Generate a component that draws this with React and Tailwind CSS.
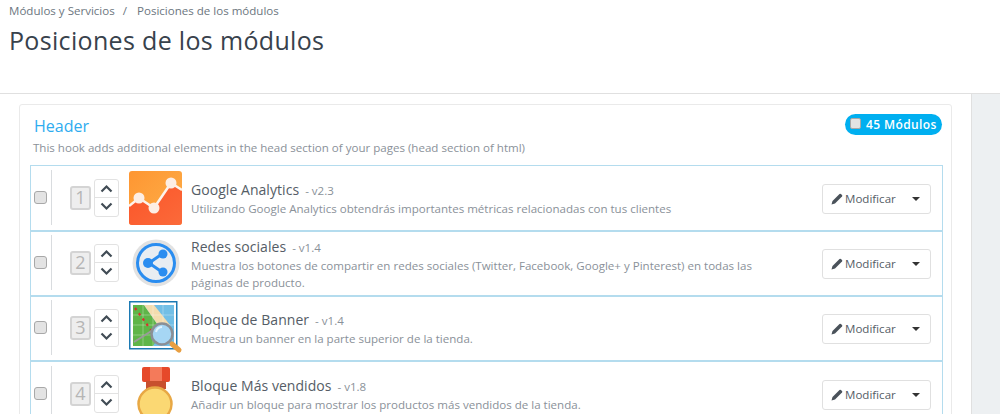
function Analytics() {
  return (
    <svg width="54" height="54" viewBox="0 0 54 54">
      <defs>
        <linearGradient id="ga1" x1="0" y1="0" x2="1" y2="1"><stop offset="0" stopColor="#fe9632" /><stop offset="1" stopColor="#fdb04a" /></linearGradient>
        <linearGradient id="ga2" x1="0" y1="0" x2="1" y2="1"><stop offset="0" stopColor="#fb5428" /><stop offset="1" stopColor="#fb6a3a" /></linearGradient>
      </defs>
      <rect width="53" height="54" rx="3" fill="url(#ga1)" />
      <path d="M0 34 L10 27 L25 37 L42 12 L53 20 V51 a3 3 0 0 1-3 3 H3 a3 3 0 0 1-3-3 Z" fill="url(#ga2)" />
      <path d="M0 35 L10 27 L25 37 L42 12 L53 19" fill="none" stroke="#fdf3ec" strokeWidth="2.5" />
      <circle cx="10" cy="27" r="5.5" fill="#fdeee4" />
      <circle cx="25" cy="37" r="5.5" fill="#fdeee4" />
      <circle cx="42" cy="12" r="5.5" fill="#fdeee4" />
    </svg>
  );
}
function Share() {
  return (
    <svg width="54" height="54" viewBox="0 0 54 54">
      <circle cx="27" cy="27" r="23.5" fill="#e2e2e2" />
      <circle cx="27" cy="27" r="18.5" fill="#e8edf2" stroke="#2a8df0" strokeWidth="3" />
      <path d="M33 18 L20 27 L33 36" fill="none" stroke="#2a8df0" strokeWidth="3" />
      <circle cx="34" cy="18" r="4.5" fill="#2a8df0" />
      <circle cx="19" cy="27" r="5" fill="#2a8df0" />
      <circle cx="34" cy="36" r="4.5" fill="#2a8df0" />
    </svg>
  );
}
function MapIcon() {
  return (
    <svg width="54" height="54" viewBox="0 0 54 54">
      <rect x="0.75" y="0.75" width="47" height="47" fill="#fff" stroke="#1c7ab4" strokeWidth="1.5" />
      <rect x="4" y="4" width="41" height="41" fill="#72bfe6" />
      <path d="M4 4 H15 L33 30 L24 45 H4 Z" fill="#5fb548" />
      <path d="M15 4 H25 L41 24 L33 30 Z" fill="#f3dcae" />
      <path d="M4 14 H45 M4 24 H45 M4 34 H45 M14 4 V45 M24 4 V45 M34 4 V45" stroke="#ffffff" strokeOpacity="0.3" strokeWidth="1" />
      <path d="M6 7 L22 29" stroke="#d8322e" strokeWidth="2.2" strokeDasharray="2.5 4" />
      <path d="M5 41 L24 29" stroke="#9a9a9a" strokeWidth="2" />
      <path d="M43 43 L50 49" stroke="#e89f42" strokeWidth="5" strokeLinecap="round" />
      <circle cx="33" cy="33" r="10.5" fill="#a6d6f4" stroke="#8a8f96" strokeWidth="2.5" />
      <path d="M27 31 a6.5 6.5 0 0 1 6 -5" fill="none" stroke="#e4f4ff" strokeWidth="2" />
    </svg>
  );
}
function Medal() {
  return (
    <svg width="54" height="54" viewBox="0 0 54 54">
      <rect x="13" y="0" width="28" height="15" rx="2" fill="#e6492a" />
      <rect x="21" y="0" width="12" height="15" fill="#f47a5a" />
      <rect x="17" y="14" width="20" height="8" fill="#c8502e" />
      <circle cx="26" cy="37" r="16.5" fill="#fbd873" stroke="#e8a845" strokeWidth="2.5" />
    </svg>
  );
}

function Row({ n, Icon, name, ver, desc, first, last }) {
  return (
    <div className={`flex items-center pl-[3px] border-[#b4dcee] ${first ? "h-[66px] pb-[1px]" : "h-[65px] pb-[2px]"} ${last ? "" : "border-b-2"}`}>
      <span className="w-[13px] h-[13px] rounded-[3px] bg-[#e3e3e3] border border-[#a8a8a8] shrink-0" />
      <div className="ml-[4px] h-[55px] w-px bg-[#d9dcdf] shrink-0" />
      <div className="ml-[18px] w-[21px] h-[24px] bg-[#eeeeee] border-2 border-[#d4d4d4] rounded-[3px] flex items-center justify-center text-[18px] text-[#b5b5b5] shrink-0">{n}</div>
      <div className="ml-[3px] w-[25px] h-[38px] flex flex-col border border-[#e2e2e2] rounded-[3px] bg-white shrink-0">
        <div className="h-[18px] flex items-center justify-center border-b border-[#e2e2e2]">
          <svg width="13" height="9" viewBox="0 0 13 9"><path d="M1.5 7.5 L6.5 2.5 L11.5 7.5" fill="none" stroke="#414c55" strokeWidth="2.2" /></svg>
        </div>
        <div className="flex-1 flex items-center justify-center">
          <svg width="13" height="9" viewBox="0 0 13 9"><path d="M1.5 1.5 L6.5 6.5 L11.5 1.5" fill="none" stroke="#414c55" strokeWidth="2.2" /></svg>
        </div>
      </div>
      <div className="ml-[10px] w-[54px] h-[54px] shrink-0"><Icon /></div>
      <div className="ml-[8px] mt-[2px] flex-1 min-w-0 pr-[50px]">
        <div className="flex items-baseline h-[20px] leading-[20px]">
          <span className="text-[14px] tracking-[0.05px] text-[#555d66]">{name}</span>
          <span className="ml-[6px] text-[11.55px] text-[#8a9199]">- {ver}</span>
        </div>
        <p className="text-[11.55px] leading-[17px] text-[#8a9199] max-w-[570px]">{desc}</p>
      </div>
      <div className="mr-[11px] mt-[2px] w-[109px] h-[30px] shrink-0 flex items-center border border-[#e0e0e0] rounded-[3px] bg-white pl-[8px]">
        <svg width="12" height="12" viewBox="0 0 12 12"><path d="M0.5 11.5 L1.5 8 L8.5 1 a1 1 0 0 1 1.4 0 l1.1 1.1 a1 1 0 0 1 0 1.4 L4 10.5 Z" fill="#4a525a" /></svg>
        <span className="ml-[2px] text-[11.55px] text-[#555d66]">Modificar</span>
        <span className="ml-[16px] w-0 h-0 border-x-[4px] border-x-transparent border-t-[4px] border-t-[#333]" />
      </div>
    </div>
  );
}

export default function App() {
  return (
    <div className="h-[414px] w-[1000px] overflow-hidden bg-white flex flex-col font-['Open_Sans','Noto_Sans',sans-serif]">
      <header className="h-[94px] shrink-0 border-b border-[#e0e0e0] pl-[9px] pt-[3px]">
        <div className="flex text-[11.55px] leading-[16px] text-[#6c7680]">
          <span>Módulos y Servicios</span>
          <span className="ml-[8px] mr-[10px]">/</span>
          <span>Posiciones de los módulos</span>
        </div>
        <h1 className="mt-[3px] text-[25px] leading-[36px] text-[#38424c] tracking-[0.33px]">Posiciones de los módulos</h1>
      </header>
      <div className="flex flex-1 min-h-0">
        <main className="w-[972px] shrink-0 pt-[10px] pl-[19px] pr-[19px] border-r border-[#e0e0e0] bg-white">
          <section className="h-[400px] border border-[#eaeaea] rounded-[3px] bg-white pl-[10px] pr-[8px]">
            <div className="flex justify-between h-[28px]">
              <h2 className="ml-[4px] mt-[10px] text-[16px] leading-[22px] text-[#2eacef]">Header</h2>
              <div className="mt-[9px] h-[21px] w-[97px] mr-[1px] rounded-full bg-[#00aff0] flex items-center pl-[5px] text-white">
                <span className="w-[11px] h-[11px] mb-[3px] rounded-[2px] bg-[#e3e3e3] border border-[#a8a8a8]" />
                <span className="ml-[5px] text-[12px] font-semibold tracking-[0.4px]">45 Módulos</span>
              </div>
            </div>
            <p className="ml-[3px] mt-[6px] text-[11.55px] leading-[17px] text-[#8a9199]">This hook adds additional elements in the head section of your pages (head section of html)</p>
            <div className="mt-[9px] border border-b-0 border-[#b4dcee]">
              <Row first n="1" Icon={Analytics} name="Google Analytics" ver="v2.3" desc="Utilizando Google Analytics obtendrás importantes métricas relacionadas con tus clientes" />
              <Row n="2" Icon={Share} name="Redes sociales" ver="v1.4" desc="Muestra los botones de compartir en redes sociales (Twitter, Facebook, Google+ y Pinterest) en todas las páginas de producto." />
              <Row n="3" Icon={MapIcon} name="Bloque de Banner" ver="v1.4" desc="Muestra un banner en la parte superior de la tienda." />
              <Row n="4" Icon={Medal} name="Bloque Más vendidos" ver="v1.8" desc="Añadir un bloque para mostrar los productos más vendidos de la tienda." last />
            </div>
          </section>
        </main>
        <aside className="flex-1 bg-[#edf0f2]" />
      </div>
    </div>
  );
}
